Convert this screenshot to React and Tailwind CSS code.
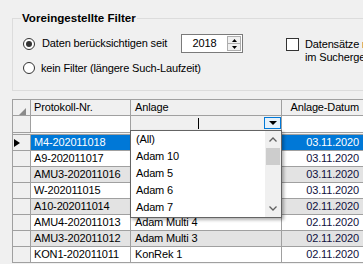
import React from "react";

function Radio({ checked }) {
  return (
    <span className="w-[12px] h-[12px] rounded-full border border-[#333333] bg-white flex items-center justify-center shrink-0">
      {checked && <span className="w-[6px] h-[6px] rounded-full bg-[#333333]" />}
    </span>
  );
}

const rows = [
  ["M4-202011018", "", "03.11.2020"],
  ["A9-202011017", "", "03.11.2020"],
  ["AMU3-202011016", "", "03.11.2020"],
  ["W-202011015", "", "03.11.2020"],
  ["A10-202011014", "", "02.11.2020"],
  ["AMU4-202011013", "Adam Multi 4", "02.11.2020"],
  ["AMU3-202011012", "Adam Multi 3", "02.11.2020"],
  ["KON1-202011011", "KonRek 1", "02.11.2020"],
];

const items = ["(All)", "Adam 10", "Adam 5", "Adam 6", "Adam 7"];

export default function App() {
  return (
    <div className="w-[363px] h-[264px] bg-[#f0f0f0] overflow-hidden relative font-['Liberation_Sans',Arial,sans-serif] text-[11px] tracking-[-0.15px] leading-none text-black">
      {/* Group box */}
      <div className="ml-[12px] mt-[18px] h-[73px] border border-r-0 border-[#dcdcdc] relative">
        <span className="absolute left-[8px] top-[-8px] px-[1px] bg-[#f0f0f0] font-bold text-[11.6px] tracking-[0px] leading-[14px] whitespace-nowrap">
          Voreingestellte Filter
        </span>
        <div className="flex pt-[15px] pl-[10px]">
          <div className="flex flex-col">
            <div className="flex items-center h-[19px]">
              <Radio checked />
              <span className="ml-[7px] w-[139px] whitespace-nowrap">Daten berücksichtigen seit</span>
              <div className="w-[62px] h-[19px] border border-[#7a7a7a] bg-white flex">
                <div className="flex-1 flex items-center justify-center">2018</div>
                <div className="w-[15px] flex flex-col pr-[1px] py-[1px] gap-0">
                  <div className="flex-1 border border-[#adadad] bg-[#f0f0f0] flex items-center justify-center">
                    <svg width="5" height="3" viewBox="0 0 5 3"><path d="M2.5 0 L5 3 L0 3 Z" fill="#000" /></svg>
                  </div>
                  <div className="flex-1 border border-t-0 border-[#adadad] bg-[#f0f0f0] flex items-center justify-center">
                    <svg width="5" height="3" viewBox="0 0 5 3"><path d="M0 0 L5 0 L2.5 3 Z" fill="#000" /></svg>
                  </div>
                </div>
              </div>
            </div>
            <div className="flex items-center mt-[8px] h-[14px]">
              <Radio />
              <span className="ml-[6px] whitespace-nowrap">kein Filter (längere Such-Laufzeit)</span>
            </div>
          </div>
          <div className="ml-[43px] mt-[4px] flex">
            <span className="w-[13px] h-[13px] border border-[#333333] bg-white shrink-0" />
            <div className="ml-[6px] leading-[13px] whitespace-nowrap">
              <div>Datensätze nicht</div>
              <div>im Suchergebnis</div>
            </div>
          </div>
        </div>
      </div>

      {/* Grid */}
      <div className="ml-[12px] mt-[8px] border-t border-l border-[#a0a0a0] relative">
        {/* header */}
        <div className="flex h-[16px] border-b border-[#a0a0a0] bg-[#f0f0f0]">
          <div className="w-[18px] border-r border-[#a0a0a0] relative">
            <svg className="absolute left-[6px] top-[8px]" width="7" height="7" viewBox="0 0 7 7"><path d="M7 0 L7 7 L0 7 Z" fill="#8a8a8a" /></svg>
          </div>
          <div className="w-[100px] border-r border-[#a0a0a0] pl-[3px] flex items-center">Protokoll-Nr.</div>
          <div className="w-[151px] border-r border-[#a0a0a0] pl-[4px] flex items-center">Anlage</div>
          <div className="w-[81px] pr-[4px] flex items-center justify-end">Anlage-Datum</div>
        </div>
        {/* filter row */}
        <div className="flex h-[19px] border-b-[3px] border-double border-[#a0a0a0]">
          <div className="w-[18px] border-r border-[#a0a0a0] bg-[#f0f0f0]" />
          <div className="w-[100px] border-r border-[#a0a0a0] bg-white" />
          <div className="w-[151px] border-r border-[#a0a0a0] bg-[#f0f0f0] flex items-start pt-[1px]">
            <span className="ml-[67px] mt-[1px] w-[1px] h-[11px] bg-black" />
            <span className="ml-auto w-[17px] h-[12px] border border-[#0078d7] bg-[#e5f1fb] flex items-center justify-center">
              <svg width="8" height="4" viewBox="0 0 8 4"><path d="M0 0 L8 0 L4 4 Z" fill="#000" /></svg>
            </span>
          </div>
          <div className="w-[81px] bg-white" />
        </div>
        {/* data rows */}
        {rows.map((r, i) => {
          const sel = i === 0;
          const bg = sel ? "bg-[#0078d7] text-white" : i % 2 === 0 ? "bg-[#e3e3e3]" : "bg-white";
          return (
            <div key={i} className="flex h-[16px] border-b border-[#a0a0a0]">
              <div className="w-[18px] border-r border-[#a0a0a0] bg-[#f0f0f0] flex items-center pl-[1px]">
                {sel && (
                  <svg width="6" height="8" viewBox="0 0 6 8"><path d="M0 0 L6 4 L0 8 Z" fill="#000" /></svg>
                )}
              </div>
              <div className={`w-[100px] border-r border-[#a0a0a0] pl-[3px] flex items-center whitespace-nowrap ${bg}`}>{r[0]}</div>
              <div className={`w-[151px] border-r border-[#a0a0a0] pl-[4px] flex items-center whitespace-nowrap ${bg}`}>{r[1]}</div>
              <div className={`w-[81px] pr-[4px] flex items-center justify-end ${sel ? "bg-[#0078d7] text-white" : i % 2 === 0 ? "bg-[#e3e3e3] text-[#101040]" : "bg-white text-[#101040]"}`}>{r[2]}</div>
            </div>
          );
        })}

        {/* dropdown list */}
        <div className="absolute left-[117px] top-[30px] w-[152px] h-[88px] border border-[#646464] bg-white shadow-[2px_2px_3px_rgba(0,0,0,0.3)] flex">
          <div className="flex-1 flex flex-col">
            {items.map((t) => (
              <div key={t} className="h-[17px] pl-[5px] flex items-center">{t}</div>
            ))}
          </div>
          <div className="w-[16px] bg-[#f0f0f0] flex flex-col items-center">
            <div className="h-[17px] flex items-center justify-center">
              <svg width="8" height="5" viewBox="0 0 8 5"><path d="M0.5 4.5 L4 1 L7.5 4.5" fill="none" stroke="#606060" strokeWidth="1.3" /></svg>
            </div>
            <div className="w-[14px] h-[17px] bg-[#cdcdcd]" />
            <div className="flex-1" />
            <div className="h-[17px] flex items-center justify-center">
              <svg width="8" height="5" viewBox="0 0 8 5"><path d="M0.5 0.5 L4 4 L7.5 0.5" fill="none" stroke="#606060" strokeWidth="1.3" /></svg>
            </div>
          </div>
        </div>
      </div>
    </div>
  );
}
